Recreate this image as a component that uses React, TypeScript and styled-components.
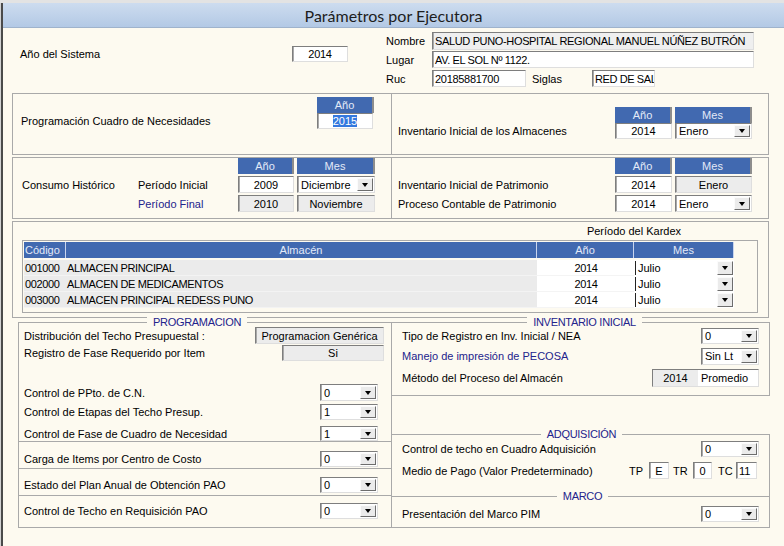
import React from 'react';
import styled, { createGlobalStyle } from 'styled-components';

const CREAM = '#fdfaf0';
const LINE = '#a9a9a9';
const HEAD = '#4169b0';
const NAVY = '#23238c';

const GlobalStyle = createGlobalStyle`
  html, body { margin: 0; padding: 0; background: ${CREAM}; }
  body { font-family: "Liberation Sans", Arial, sans-serif; font-size: 11px; color: #000; }
  * { box-sizing: border-box; }
`;

const Window = styled.div`
  width: 784px;
  height: 546px;
  overflow: hidden;
  background: ${CREAM};
  border-top: 3px solid #e3e3e3;
  padding-left: 3px;
  box-shadow: inset 1px 0 0 #d2d2d2, inset 3px 0 0 #4a4a4a;
`;

const TitleBar = styled.div`
  height: 25px;
  border-bottom: 1px solid #9fb3cc;
  background: linear-gradient(#cddcef, #b3c9e5);
  display: flex;
  align-items: center;
  justify-content: center;
  font-family: Lato, "Noto Sans", sans-serif;
  font-size: 16px;
  color: #1d1d1d;
`;

const Content = styled.div`
  padding-left: 9px;
`;

/* ---------- generic controls ---------- */

const Label = styled.span<{ $blue?: boolean }>`
  color: ${p => (p.$blue ? NAVY : '#000')};
  white-space: nowrap;
`;

const TextBox = styled.div<{ $w: number; $h?: number; $align?: string; $bg?: string; $mr?: number; $ls?: number }>`
  width: ${p => p.$w}px;
  height: ${p => p.$h ?? 16}px;
  margin-right: ${p => p.$mr ?? 0}px;
  flex: none;
  background: ${p => p.$bg ?? '#fff'};
  border: 1px solid;
  border-color: #7e7e7e #dedede #dedede #7e7e7e;
  box-shadow: inset 1px 0 0 #a9a9a9;
  display: flex;
  align-items: center;
  justify-content: ${p => p.$align ?? 'flex-start'};
  padding: 0 2px;
  letter-spacing: ${p => p.$ls ?? 0}px;
  white-space: nowrap;
  overflow: hidden;
`;

const Selected = styled.span`
  background: #3478de;
  color: #fff;
  line-height: 12px;
`;

const ComboBox = styled.div<{ $w: number; $h?: number; $mr?: number }>`
  width: ${p => p.$w}px;
  height: ${p => p.$h ?? 16}px;
  margin-right: ${p => p.$mr ?? 0}px;
  flex: none;
  background: #fff;
  border: 1px solid;
  border-color: #7e7e7e #dedede #dedede #7e7e7e;
  box-shadow: inset 1px 0 0 #a9a9a9;
  display: flex;
  align-items: stretch;
  padding: 1px 1px 1px 2px;
`;

const ComboText = styled.span`
  flex: 1;
  display: flex;
  align-items: center;
  padding-left: 1px;
  white-space: nowrap;
  overflow: hidden;
`;

const DropBtn = styled.span<{ $h?: number }>`
  width: 16px;
  flex: none;
  ${p => (p.$h ? `height: ${p.$h}px; align-self: center;` : '')}
  background: #ebebeb;
  border: 1px solid;
  border-color: #fbfbfb #6d6d6d #6d6d6d #fbfbfb;
  display: flex;
  align-items: center;
  justify-content: center;
`;

const Arrow = styled.span`
  width: 0;
  height: 0;
  border-left: 3.5px solid transparent;
  border-right: 3.5px solid transparent;
  border-top: 4px solid #000;
`;

const Combo: React.FC<{ w: number; h?: number; text: string; mr?: number }> = ({ w, h, text, mr }) => (
  <ComboBox $w={w} $h={h} $mr={mr}>
    <ComboText>{text}</ComboText>
    <DropBtn>
      <Arrow />
    </DropBtn>
  </ComboBox>
);

/* ---------- top section ---------- */

const TopSection = styled.div`
  height: 65px;
  display: flex;
`;

const TopLeft = styled.div`
  width: 374px;
  padding: 18px 0 0 8px;
  display: flex;
  align-items: center;
  align-self: flex-start;
`;

const TopLabel = styled.span`
  flex: 0 0 272px;
`;

const TopRight = styled.div`
  padding-top: 4px;
  display: flex;
  flex-direction: column;
  gap: 2px;
`;

const FieldRow = styled.div`
  display: flex;
  align-items: center;
  height: 17px;
`;

const FieldLabel = styled.span<{ $w: number; $ml?: number }>`
  width: ${p => p.$w}px;
  margin-left: ${p => p.$ml ?? 0}px;
  flex: none;
`;

/* ---------- panels with year / month columns ---------- */

const SplitRow = styled.div<{ $h: number; $mt?: number }>`
  display: grid;
  grid-template-columns: 380px 377px;
  height: ${p => p.$h}px;
  margin-top: ${p => p.$mt ?? 0}px;
`;

const Panel = styled.div<{ $right?: boolean; $pt: number; $pl: number }>`
  border: 1px solid ${LINE};
  ${p => (p.$right ? 'border-left: none;' : '')}
  padding: ${p => p.$pt}px 0 0 ${p => p.$pl}px;
`;

const CellGrid = styled.div<{ $cols: string; $rows: string; $gap?: number }>`
  display: grid;
  grid-template-columns: ${p => p.$cols};
  grid-template-rows: ${p => p.$rows};
  row-gap: ${p => p.$gap ?? 2}px;
  align-items: center;
`;

const ColHeader = styled.div<{ $w: number }>`
  width: ${p => p.$w}px;
  height: 16px;
  background: ${HEAD};
  color: #e3eaf8;
  border-right: 2px solid #8d8d8d;
  display: flex;
  align-items: center;
  justify-content: center;
  align-self: stretch;
`;

/* ---------- kardex grid ---------- */

const KardexPanel = styled.div`
  margin-top: 2px;
  width: 757px;
  height: 97px;
  border: 1px solid ${LINE};
`;

const KardexCaption = styled.div`
  margin-left: 522px;
  width: 198px;
  height: 18px;
  line-height: 18px;
  text-align: center;
`;

const GridFrame = styled.div`
  margin-left: 9px;
  width: 736px;
  height: 73px;
  border: 1px solid ${LINE};
  padding: 1px;
`;

const TRow = styled.div<{ $head?: boolean }>`
  display: grid;
  grid-template-columns: 42px 471px 97px 100px;
  height: 16px;
  margin-bottom: ${p => (p.$head ? 2 : 0)}px;
`;

const HeadCell = styled.div<{ $left?: boolean }>`
  background: ${HEAD};
  color: #e3eaf8;
  border-right: 1px solid #c9d5ee;
  display: flex;
  align-items: center;
  justify-content: ${p => (p.$left ? 'flex-start' : 'center')};
  padding-left: ${p => (p.$left ? 1 : 0)}px;
`;

const BodyCell = styled.div<{ $gray?: boolean; $center?: boolean }>`
  background: ${p => (p.$gray ? '#ebebeb' : '#fff')};
  border-bottom: 1px solid ${p => (p.$gray ? '#f3f3f3' : '#f4f4f4')};
  display: flex;
  align-items: center;
  justify-content: ${p => (p.$center ? 'center' : 'flex-start')};
  padding-left: 1px;
  letter-spacing: -0.35px;
  white-space: nowrap;
`;

const MesCell = styled.div`
  background: #fff;
  display: flex;
  align-items: center;
  padding: 1px;
`;

const MesEdit = styled.span`
  flex: 1;
  height: 14px;
  border-left: 1px solid #222;
  padding-left: 2px;
  display: flex;
  align-items: center;
`;

/* ---------- group boxes ---------- */

const BottomArea = styled.div`
  margin: 4px 0 0 6px;
  display: grid;
  grid-template-columns: 374px 378px;
`;

const Column = styled.div<{ $overlap?: boolean }>`
  display: flex;
  flex-direction: column;
  margin-left: ${p => (p.$overlap ? -1 : 0)}px;
`;

const GroupBox = styled.div<{ $h: number; $mt?: number; $pl: number; $pr: number }>`
  height: ${p => p.$h}px;
  margin-top: ${p => p.$mt ?? 0}px;
  border: 1px solid ${LINE};
  padding: 0 ${p => p.$pr}px 0 ${p => p.$pl}px;
`;

const TitleRow = styled.div<{ $shift?: number }>`
  display: flex;
  justify-content: center;
  margin: -7px 0 -6px;
  padding-left: ${p => Math.max(0, (p.$shift ?? 0) * 2)}px;
  padding-right: ${p => Math.max(0, -(p.$shift ?? 0) * 2)}px;
`;

const GroupTitle = styled.span`
  background: ${CREAM};
  color: ${NAVY};
  padding: 0 6px;
  line-height: 13px;
  letter-spacing: -0.3px;
`;

const FormRow = styled.div<{ $mt: number; $h: number }>`
  margin-top: ${p => p.$mt}px;
  height: ${p => p.$h}px;
  display: flex;
  align-items: center;
  justify-content: space-between;
`;

const PayGroup = styled.div`
  display: flex;
  align-items: center;
  height: 100%;
  margin-right: 2px;
`;

const PayLabel = styled.span<{ $w: number; $ml?: number }>`
  width: ${p => p.$w}px;
  margin-left: ${p => p.$ml ?? 0}px;
  flex: none;
`;

const MethodBox = styled.div`
  width: 107px;
  height: 18px;
  display: flex;
  border: 1px solid;
  border-color: #7e7e7e #dedede #dedede #7e7e7e;
  box-shadow: inset 1px 0 0 #a9a9a9;
  background: #fff;
`;

const MethodPart = styled.span<{ $gray?: boolean; $w?: number }>`
  ${p => (p.$w ? `width: ${p.$w}px;` : 'flex: 1;')}
  background: ${p => (p.$gray ? '#ececec' : '#fff')};
  display: flex;
  align-items: center;
  justify-content: ${p => (p.$gray ? 'center' : 'flex-start')};
  padding-left: ${p => (p.$gray ? 0 : 3)}px;
`;

const kardexRows = [
  ['001000', 'ALMACEN PRINCIPAL'],
  ['002000', 'ALMACEN DE MEDICAMENTOS'],
  ['003000', 'ALMACEN PRINCIPAL REDESS PUNO'],
];

export default function App() {
  return (
    <>
      <GlobalStyle />
      <Window>
        <TitleBar>Parámetros por Ejecutora</TitleBar>
        <Content>
          <TopSection>
            <TopLeft>
              <TopLabel>Año del Sistema</TopLabel>
              <TextBox $w={56} $align="center" $ls={-0.3}>2014</TextBox>
            </TopLeft>
            <TopRight>
              <FieldRow>
                <FieldLabel $w={46}>Nombre</FieldLabel>
                <TextBox $w={322} $h={18} $bg="#efefef" $ls={-0.35}>
                  SALUD PUNO-HOSPITAL REGIONAL MANUEL NÚÑEZ BUTRÓN
                </TextBox>
              </FieldRow>
              <FieldRow>
                <FieldLabel $w={46}>Lugar</FieldLabel>
                <TextBox $w={322} $h={17} $ls={-0.35}>AV. EL SOL Nº 1122.</TextBox>
              </FieldRow>
              <FieldRow>
                <FieldLabel $w={46}>Ruc</FieldLabel>
                <TextBox $w={94} $h={17} $ls={-0.3}>20185881700</TextBox>
                <FieldLabel $w={60} $ml={6}>Siglas</FieldLabel>
                <TextBox $w={63} $h={17} $ls={-0.4}>RED DE SAL</TextBox>
              </FieldRow>
            </TopRight>
          </TopSection>

          <SplitRow $h={62}>
            <Panel $pt={3} $pl={8}>
              <CellGrid $cols="296px 57px" $rows="16px 16px" $gap={0}>
                <span />
                <ColHeader $w={57}>Año</ColHeader>
                <Label>Programación Cuadro de Necesidades</Label>
                <TextBox $w={56} $align="center">
                  <Selected>2015</Selected>
                </TextBox>
              </CellGrid>
            </Panel>
            <Panel $right $pt={13} $pl={6}>
              <CellGrid $cols="217px 60px 77px" $rows="16px 16px" $gap={0}>
                <span />
                <ColHeader $w={57}>Año</ColHeader>
                <ColHeader $w={77}>Mes</ColHeader>
                <Label>Inventario Inicial de los Almacenes</Label>
                <TextBox $w={57} $align="center">2014</TextBox>
                <Combo w={77} text="Enero" />
              </CellGrid>
            </Panel>
          </SplitRow>

          <SplitRow $h={62} $mt={2}>
            <Panel $pt={0} $pl={9}>
              <CellGrid $cols="116px 100px 59px 78px" $rows="16px 17px 17px">
                <span />
                <span />
                <ColHeader $w={56}>Año</ColHeader>
                <ColHeader $w={78}>Mes</ColHeader>
                <Label>Consumo Histórico</Label>
                <Label>Período Inicial</Label>
                <TextBox $w={56} $h={17} $align="center">2009</TextBox>
                <Combo w={78} h={17} text="Diciembre" />
                <span />
                <Label $blue>Período Final</Label>
                <TextBox $w={56} $h={17} $align="center" $bg="#ececec">2010</TextBox>
                <TextBox $w={78} $h={17} $align="center" $bg="#ececec">Noviembre</TextBox>
              </CellGrid>
            </Panel>
            <Panel $right $pt={0} $pl={6}>
              <CellGrid $cols="217px 60px 77px" $rows="16px 17px 17px">
                <span />
                <ColHeader $w={57}>Año</ColHeader>
                <ColHeader $w={77}>Mes</ColHeader>
                <Label>Inventario Inicial de Patrimonio</Label>
                <TextBox $w={57} $h={17} $align="center">2014</TextBox>
                <TextBox $w={77} $h={17} $align="center" $bg="#ececec">Enero</TextBox>
                <Label>Proceso Contable de Patrimonio</Label>
                <TextBox $w={57} $h={17} $align="center">2014</TextBox>
                <Combo w={77} h={17} text="Enero" />
              </CellGrid>
            </Panel>
          </SplitRow>

          <KardexPanel>
            <KardexCaption>Período del Kardex</KardexCaption>
            <GridFrame>
              <TRow $head>
                <HeadCell $left>Código</HeadCell>
                <HeadCell>Almacén</HeadCell>
                <HeadCell>Año</HeadCell>
                <HeadCell>Mes</HeadCell>
              </TRow>
              {kardexRows.map(([code, name]) => (
                <TRow key={code}>
                  <BodyCell $gray>{code}</BodyCell>
                  <BodyCell $gray>{name}</BodyCell>
                  <BodyCell $center>2014</BodyCell>
                  <MesCell>
                    <MesEdit>Julio</MesEdit>
                    <DropBtn $h={14}>
                      <Arrow />
                    </DropBtn>
                  </MesCell>
                </TRow>
              ))}
            </GridFrame>
          </KardexPanel>

          <BottomArea>
            <Column>
              <GroupBox $h={120} $pl={5} $pr={7}>
                <TitleRow $shift={-7}>
                  <GroupTitle>PROGRAMACION</GroupTitle>
                </TitleRow>
                <FormRow $mt={4} $h={17}>
                  <Label>Distribución del Techo Presupuestal :</Label>
                  <TextBox $w={129} $h={17} $align="center" $bg="#ececec">
                    Programacion Genérica
                  </TextBox>
                </FormRow>
                <FormRow $mt={1} $h={16}>
                  <Label>Registro de Fase Requerido por Item</Label>
                  <TextBox $w={102} $h={16} $align="center" $bg="#ececec">
                    Si
                  </TextBox>
                </FormRow>
                <FormRow $mt={23} $h={17}>
                  <Label>Control de PPto. de C.N.</Label>
                  <Combo w={58} h={17} text="0" mr={6} />
                </FormRow>
                <FormRow $mt={3} $h={16}>
                  <Label>Control de Etapas del Techo Presup.</Label>
                  <Combo w={58} text="1" mr={6} />
                </FormRow>
                <FormRow $mt={6} $h={15}>
                  <Label>Control de Fase de Cuadro de Necesidad</Label>
                  <Combo w={58} h={15} text="1" mr={6} />
                </FormRow>
              </GroupBox>
              <GroupBox $h={28} $mt={-1} $pl={5} $pr={7}>
                <FormRow $mt={9} $h={16}>
                  <Label>Carga de Items por Centro de Costo</Label>
                  <Combo w={58} text="0" mr={6} />
                </FormRow>
              </GroupBox>
              <GroupBox $h={28} $mt={-1} $pl={5} $pr={7}>
                <FormRow $mt={8} $h={16}>
                  <Label>Estado del Plan Anual de Obtención PAO</Label>
                  <Combo w={58} text="0" mr={6} />
                </FormRow>
              </GroupBox>
              <GroupBox $h={33} $mt={-1} $pl={5} $pr={7}>
                <FormRow $mt={7} $h={16}>
                  <Label>Control de Techo en Requisición PAO</Label>
                  <Combo w={58} text="0" mr={6} />
                </FormRow>
              </GroupBox>
            </Column>

            <Column $overlap>
              <GroupBox $h={74} $pl={10} $pr={10}>
                <TitleRow $shift={4}>
                  <GroupTitle>INVENTARIO INICIAL</GroupTitle>
                </TitleRow>
                <FormRow $mt={5} $h={16}>
                  <Label>Tipo de Registro en Inv. Inicial / NEA</Label>
                  <Combo w={58} text="0" />
                </FormRow>
                <FormRow $mt={4} $h={16}>
                  <Label $blue>Manejo de impresión de PECOSA</Label>
                  <Combo w={58} h={17} text="Sin Lt" />
                </FormRow>
                <FormRow $mt={5} $h={18}>
                  <Label>Método del Proceso del Almacén</Label>
                  <MethodBox>
                    <MethodPart $gray $w={45}>2014</MethodPart>
                    <MethodPart>Promedio</MethodPart>
                  </MethodBox>
                </FormRow>
              </GroupBox>
              <GroupBox $h={63} $mt={38} $pl={10} $pr={10}>
                <TitleRow $shift={1}>
                  <GroupTitle>ADQUISICIÓN</GroupTitle>
                </TitleRow>
                <FormRow $mt={6} $h={16}>
                  <Label>Control de techo en Cuadro Adquisición</Label>
                  <Combo w={58} text="0" />
                </FormRow>
                <FormRow $mt={5} $h={17}>
                  <Label>Medio de Pago (Valor Predeterminado)</Label>
                  <PayGroup>
                    <PayLabel $w={20}>TP</PayLabel>
                    <TextBox $w={20} $h={17} $align="center">E</TextBox>
                    <PayLabel $w={20} $ml={4}>TR</PayLabel>
                    <TextBox $w={19} $h={17} $align="center">0</TextBox>
                    <PayLabel $w={18} $ml={6}>TC</PayLabel>
                    <TextBox $w={21} $h={17}>11</TextBox>
                  </PayGroup>
                </FormRow>
              </GroupBox>
              <GroupBox $h={32} $mt={-1} $pl={10} $pr={10}>
                <TitleRow $shift={2}>
                  <GroupTitle>MARCO</GroupTitle>
                </TitleRow>
                <FormRow $mt={9} $h={16}>
                  <Label>Presentación del Marco PIM</Label>
                  <Combo w={58} text="0" />
                </FormRow>
              </GroupBox>
            </Column>
          </BottomArea>
        </Content>
      </Window>
    </>
  );
}
